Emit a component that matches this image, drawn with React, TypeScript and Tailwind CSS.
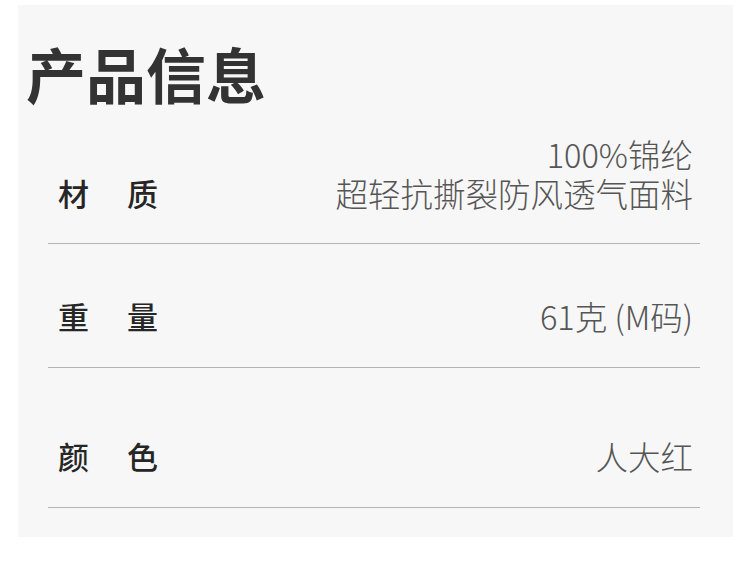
const rows = [
  { label: ["材", "质"], value: ["100%锦纶", "超轻抗撕裂防风透气面料"], pad: "pt-0 pb-[31px]" },
  { label: ["重", "量"], value: ["61克 (M码)"], pad: "pt-[52px] pb-[32px]" },
  { label: ["颜", "色"], value: ["人大红"], pad: "pt-[68px] pb-[32px]" },
]

const App = () => {
  return (
    <div className="w-[750px] h-[567px] bg-white pt-[5px] pl-[18px] font-['Noto_Sans_CJK_SC',sans-serif]">
      <div className="w-[715px] h-[532px] bg-[#f7f7f7] pt-[38px]">
        {/* title */}
        <h1 className="pl-[8px] text-[60px] leading-[60px] font-bold text-[#333] mb-[31px]">产品信息</h1>

        {/* rows */}
        <div className="ml-[30px] mr-[33px]">
          {rows.map((r, i) => (
            <div
              key={i}
              className={`flex justify-between items-end border-b border-[#b4b4b4] pl-[10px] pr-[7px] ${r.pad}`}
            >
              <div className="w-[100px] flex justify-between text-[31px] leading-[38px] font-medium text-[#262626]">
                <span>{r.label[0]}</span>
                <span>{r.label[1]}</span>
              </div>
              <div className="text-right text-[32.5px] leading-[39px] font-light text-[#555]">
                {r.value.map((v, j) => (
                  <div key={j}>{v}</div>
                ))}
              </div>
            </div>
          ))}
        </div>
      </div>
    </div>
  )
}

export default App
